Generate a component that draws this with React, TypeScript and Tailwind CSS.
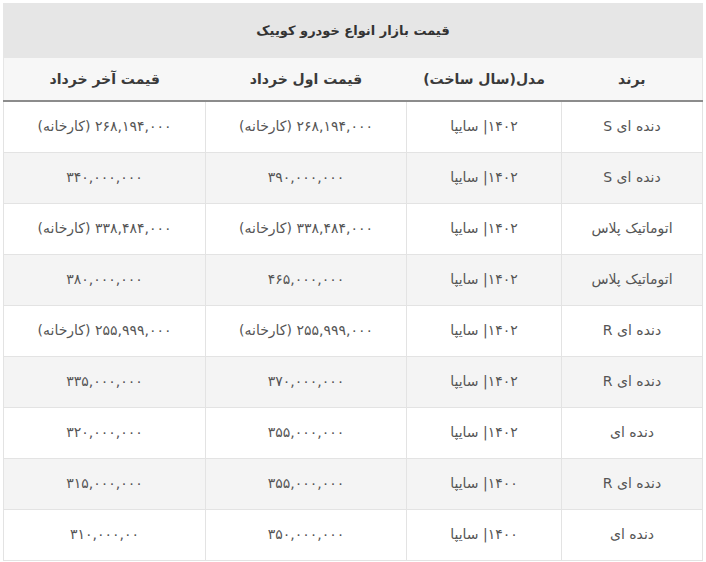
const rows = [
  { brand: 'دنده ای S', model: '۱۴۰۲| سایپا', first: '۲۶۸,۱۹۴,۰۰۰ (کارخانه)', last: '۲۶۸,۱۹۴,۰۰۰ (کارخانه)' },
  { brand: 'دنده ای S', model: '۱۴۰۲| سایپا', first: '۳۹۰,۰۰۰,۰۰۰', last: '۳۴۰,۰۰۰,۰۰۰' },
  { brand: 'اتوماتیک پلاس', model: '۱۴۰۲| سایپا', first: '۳۳۸,۴۸۴,۰۰۰ (کارخانه)', last: '۳۳۸,۴۸۴,۰۰۰ (کارخانه)' },
  { brand: 'اتوماتیک پلاس', model: '۱۴۰۲| سایپا', first: '۴۶۵,۰۰۰,۰۰۰', last: '۳۸۰,۰۰۰,۰۰۰' },
  { brand: 'دنده ای R', model: '۱۴۰۲| سایپا', first: '۲۵۵,۹۹۹,۰۰۰ (کارخانه)', last: '۲۵۵,۹۹۹,۰۰۰ (کارخانه)' },
  { brand: 'دنده ای R', model: '۱۴۰۲| سایپا', first: '۳۷۰,۰۰۰,۰۰۰', last: '۳۳۵,۰۰۰,۰۰۰' },
  { brand: 'دنده ای', model: '۱۴۰۲| سایپا', first: '۳۵۵,۰۰۰,۰۰۰', last: '۳۲۰,۰۰۰,۰۰۰' },
  { brand: 'دنده ای R', model: '۱۴۰۰| سایپا', first: '۳۵۵,۰۰۰,۰۰۰', last: '۳۱۵,۰۰۰,۰۰۰' },
  { brand: 'دنده ای', model: '۱۴۰۰| سایپا', first: '۳۵۰,۰۰۰,۰۰۰', last: '۳۱۰,۰۰۰,۰۰' },
]

export default function App() {
  const cell = 'text-center text-[14px] text-[#555] border border-[#e3e3e3]'
  const head = 'text-[14px] font-bold text-[#3a3a3a] border-b-2 border-b-[#8c8c8c]'
  return (
    <div className="bg-white w-[706px] h-[562px] overflow-hidden pl-[3px] pt-[3px] font-['DejaVu_Sans',sans-serif]">
      <table dir="rtl" className="w-[699px] border-collapse table-fixed">
        <colgroup>
          <col className="w-[141px]" />
          <col className="w-[155px]" />
          <col className="w-[201px]" />
          <col className="w-[202px]" />
        </colgroup>
        <thead>
          <tr>
            <th colSpan={4} className="h-[55px] bg-[#e6e6e6] text-[13px] font-bold text-[#333] text-center border-x border-[#e6e6e6]">
              قیمت بازار انواع خودرو کوییک
            </th>
          </tr>
          <tr className="bg-[#f7f7f7]">
            <th className={`h-[43px] border-r border-r-[#e6e6e6] ${head}`}>برند</th>
            <th className={head}>مدل(سال ساخت)</th>
            <th className={head}>قیمت اول خرداد</th>
            <th className={`border-l border-l-[#e6e6e6] ${head}`}>قیمت آخر خرداد</th>
          </tr>
        </thead>
        <tbody>
          {rows.map((r, i) => (
            <tr key={i} className={i % 2 === 1 ? 'bg-[#f4f4f4]' : 'bg-white'}>
              <td className={`h-[51px] ${cell}`}>{r.brand}</td>
              <td className={cell}>{r.model}</td>
              <td className={cell}>{r.first}</td>
              <td className={cell}>{r.last}</td>
            </tr>
          ))}
        </tbody>
      </table>
    </div>
  )
}
